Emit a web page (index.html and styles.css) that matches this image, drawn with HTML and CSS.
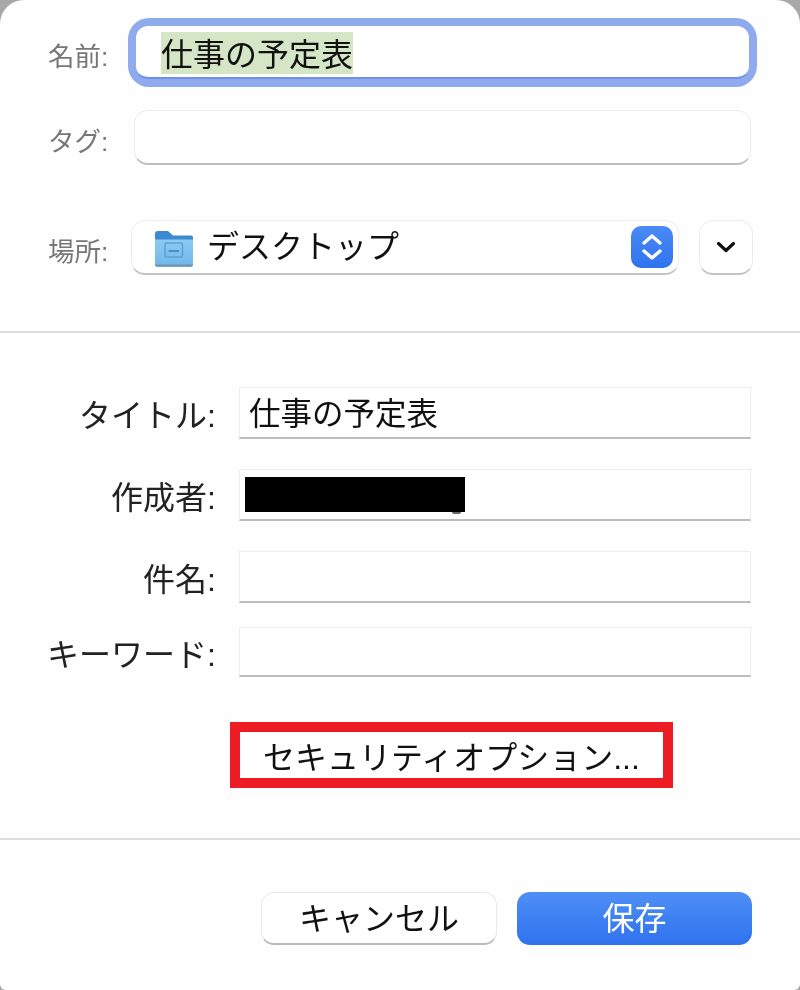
FILE: index.html
```html
<!DOCTYPE html>
<html lang="ja">
<head>
<meta charset="utf-8">
<title>保存</title>
<link rel="stylesheet" href="styles.css">
</head>
<body>
<main class="dialog">
  <section class="top">
    <div class="top-row name-row">
      <span class="top-label name-label">名前:</span>
      <div class="name-ring"><div class="name-input"><span class="selected">仕事の予定表</span></div></div>
    </div>
    <div class="top-row tag-row">
      <span class="top-label tag-label">タグ:</span>
      <div class="tag-input"></div>
    </div>
    <div class="top-row place-row">
      <span class="top-label tag-label">場所:</span>
      <div class="place-select">
        <svg class="folder" viewBox="0 0 38 36" aria-hidden="true">
          <defs>
            <linearGradient id="folderBody" x1="0" y1="0" x2="0" y2="1">
              <stop offset="0" stop-color="#8ccbf4"/>
              <stop offset="1" stop-color="#6fb6ea"/>
            </linearGradient>
          </defs>
          <path d="M0 3a3 3 0 0 1 3-3h10l5 4.500h18a2 2 0 0 1 2 2V14H0z" fill="#3d8ad0"/>
          <path d="M0 8.500h38V33a2.500 2.500 0 0 1-2.500 2.500h-33A2.500 2.500 0 0 1 0 33z" fill="url(#folderBody)"/>
          <path d="M0 33.500h38v.500a2 2 0 0 1-2 1.800H2a2 2 0 0 1-2-1.800z" fill="#6d93ad"/>
          <rect x="10" y="12" width="17.500" height="14" rx="1.500" fill="none" stroke="#5fa3d6" stroke-width="1.600"/>
          <path d="M13.500 20h10.500" stroke="#4f90c4" stroke-width="1.800"/>
        </svg>
        <span class="place-text">デスクトップ</span>
        <span class="stepper">
          <svg viewBox="0 0 42 42" aria-hidden="true">
            <path d="M13 17l8-7 8 7M13 25l8 7 8-7" fill="none" stroke="#fff" stroke-width="3.400" stroke-linecap="round" stroke-linejoin="round"/>
          </svg>
        </span>
      </div>
      <div class="expand">
        <svg viewBox="0 0 20 14" aria-hidden="true">
          <path d="M2.500 3.500l7.500 7 7.500-7" fill="none" stroke="#111" stroke-width="3.200" stroke-linecap="round" stroke-linejoin="round"/>
        </svg>
      </div>
    </div>
  </section>
  <hr class="rule rule-one">
  <section class="meta">
    <div class="meta-row"><span class="meta-label">タイトル:</span><div class="meta-input">仕事の予定表</div></div>
    <div class="meta-row author"><span class="meta-label">作成者:</span><div class="meta-input"><span class="redact"></span></div></div>
    <div class="meta-row subject"><span class="meta-label">件名:</span><div class="meta-input"></div></div>
    <div class="meta-row keyword"><span class="meta-label">キーワード:</span><div class="meta-input short"></div></div>
    <div class="security">セキュリティオプション...</div>
  </section>
  <hr class="rule rule-two">
  <section class="actions">
    <div class="btn cancel">キャンセル</div>
    <div class="btn save">保存</div>
  </section>
</main>
</body>
</html>
```
FILE: styles.css
```css
* { box-sizing: border-box; }
html, body { margin: 0; padding: 0; }
body {
  width: 800px;
  height: 990px;
  overflow: hidden;
  background: #a8a8a8;
  color: #111;
  font-family: "Liberation Sans", "Noto Sans CJK JP", sans-serif;
}
.dialog {
  width: 800px; height: 990px;
  display: flex; flex-direction: column;
  background: #fefefe;
  border-radius: 24px 24px 6px 6px;
  overflow: hidden;
  filter: blur(0.4px);
}
.top { padding-top: 18px; height: 331px; }
.top-row { display: flex; align-items: center; }
.top-label { width: 128px; padding-left: 48px; font-size: 26.500px; color: #777; white-space: nowrap; }
.name-label { padding-top: 4px; }
.tag-label { padding-top: 3px; }
.name-row { height: 69px; }
.name-ring {
  width: 629px; height: 69px; padding: 8px;
  border-radius: 21px; background: #8fabee;
}
.name-input {
  height: 53px; border-radius: 12px; background: #fff;
  padding: 6px 0 0 25px; border-bottom: 2px solid #6f90e4;
}
.selected { display: inline-block; height: 42px; line-height: 46px; font-size: 32px; background: #d5e6c6; color: #111; overflow: hidden; vertical-align: top; }
.tag-row { height: 55px; margin-top: 23px; }
.tag-input {
  width: 617px; height: 55px; margin-left: 6px;
  background: #fff; border: 1px solid #ececec; border-bottom: 2px solid #bdbdbd; border-radius: 14px;
}
.place-row { height: 55px; margin-top: 55px; }
.place-select {
  width: 548px; height: 55px; margin-left: 3px; padding: 0 5px 0 23px;
  display: flex; align-items: center;
  background: #fff; border: 1px solid #ececec; border-bottom: 2px solid #c4c4c4; border-radius: 14px;
}
.folder { width: 38px; height: 36px; flex: none; margin-top: 4px; }
.place-text { margin-left: 14px; font-size: 32px; line-height: 40px; flex: 1; }
.stepper {
  width: 42px; height: 42px; flex: none; border-radius: 10px;
  background: linear-gradient(#4a8bf5, #2f72ee);
}
.stepper svg { display: block; width: 42px; height: 42px; }
.expand {
  width: 54px; height: 55px; margin-left: 20px;
  display: flex; align-items: center; justify-content: center;
  background: #fff; border: 1px solid #ececec; border-bottom: 2px solid #c4c4c4; border-radius: 14px;
}
.expand svg { width: 20px; height: 14px; }
.rule { margin: 0; border: 0; height: 2px; background: #dedede; flex: none; }
.meta { height: 505px; padding-top: 54px; }
.meta-row { display: flex; align-items: center; height: 52px; }
.meta-label { width: 239px; padding-right: 23px; text-align: right; font-size: 32px; color: #222; white-space: nowrap; }
.meta-input {
  width: 512px; height: 52px; padding-left: 9px;
  font-size: 31.500px; line-height: 52px; color: #111;
  background: #fff; border: 1px solid #eee; border-bottom: 2px solid #bdbdbd;
}
.author { margin-top: 30px; }
.subject { margin-top: 30px; }
.keyword { margin-top: 24px; height: 50px; }
.short { height: 50px; }
.redact { display: block; position: relative; width: 220px; height: 35px; margin: 7px 0 0 -4px; background: #000; }
.redact::after {
  content: ""; position: absolute; left: 207px; top: 35px;
  width: 9px; height: 2px; border-radius: 0 0 4px 4px; background: #666;
}
.security {
  width: 443px; height: 66px; margin: 45px 0 0 230px;
  border: 10px solid #ed1c24; background: #fff;
  display: flex; align-items: center; justify-content: center;
  font-size: 32px; color: #111; white-space: nowrap;
}
.actions { display: flex; gap: 20px; padding: 52px 48px 0 261px; }
.btn {
  width: 236px; height: 53px; border-radius: 13px; padding-bottom: 5px;
  display: flex; align-items: center; justify-content: center;
  font-size: 32px; white-space: nowrap;
}
.cancel { background: #fff; border: 1px solid #e8e8e8; border-bottom: 2px solid #bbb; color: #111; }
.save { width: 235px; background: linear-gradient(#4e8ff6, #2f72ee); color: #fff; }
```
